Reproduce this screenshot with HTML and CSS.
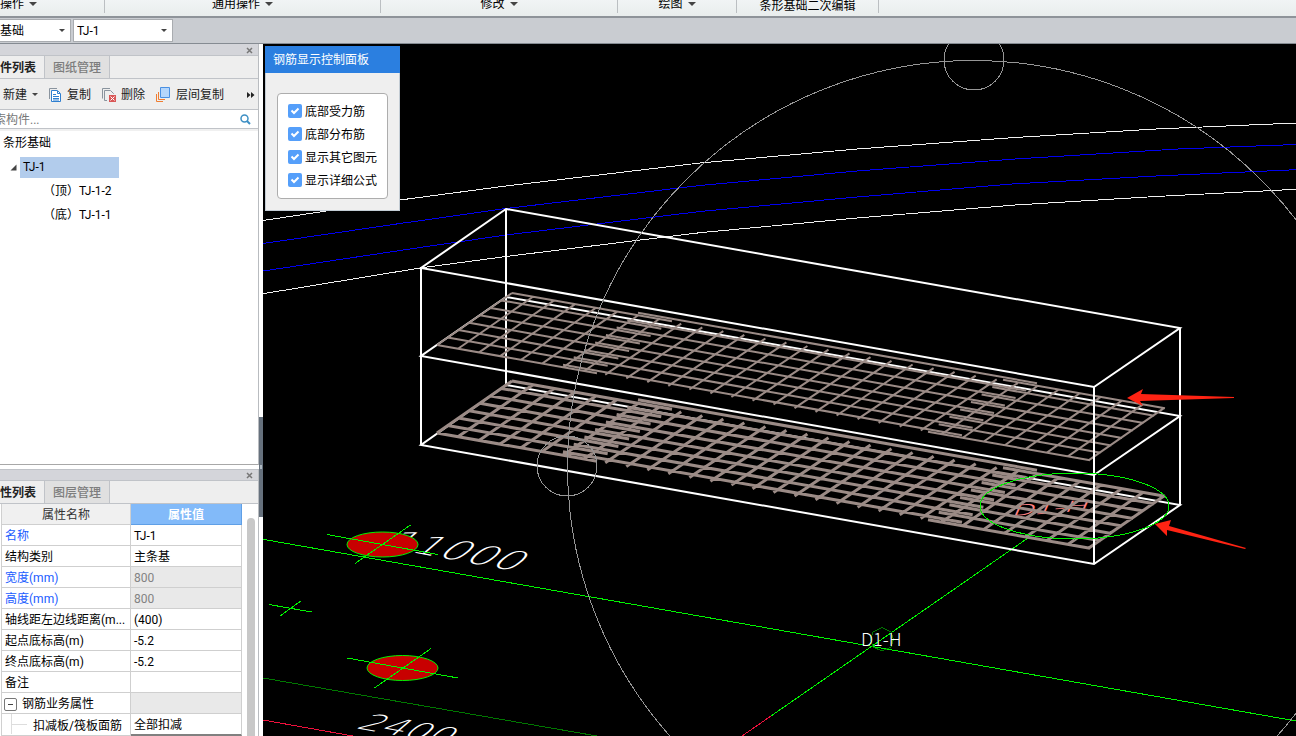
FILE: index.html
```html
<!DOCTYPE html>
<html lang="zh">
<head>
  <meta charset="UTF-8">
  <meta name="viewport" content="width=device-width, initial-scale=1.0">
  <title>条形基础</title>
  <link rel="stylesheet" href="styles.css">
</head>
<body>

  <!-- Ribbon group names -->
  <div class="ribbon">
    <div class="group group-first"><button>操作<i class="arrow"></i></button></div>
    <div class="group group-common"><button>通用操作<i class="arrow"></i></button></div>
    <div class="group group-modify"><button>修改<i class="arrow"></i></button></div>
    <div class="group group-draw"><button>绘图<i class="arrow"></i></button></div>
    <div class="group group-edit"><span>条形基础二次编辑</span></div>
  </div>

  <div class="selectors">
    <select class="type-select" aria-label="基础"><option>基础</option></select>
    <select class="name-select" aria-label="TJ-1"><option>TJ-1</option></select>
  </div>

  <div class="main">
    <div class="dock">

      <!-- Component list -->
      <section class="panel list-panel">
        <div class="panel-title">
          <button class="close"><svg width="7" height="7" viewBox="0 0 7 7"><path d="M1 1L6 6M6 1L1 6"/></svg></button>
        </div>
        <div class="tabs">
          <button class="tab active">件列表</button>
          <button class="tab">图纸管理</button>
        </div>
        <div class="tools">
          <button class="tool tool-new">新建<i class="arrow small"></i></button>
          <button class="tool tool-copy">
            <svg width="13" height="16" viewBox="0 0 13 16"><path d="M.5 12V1.500H8" fill="none" stroke="#8a949e"/><path d="M2.500 3.500H8.500L11.500 6.500V14.500H2.500Z" fill="#fff" stroke="#2f7fd0"/><path d="M8.500 4V6.500H11M4 7.500H7M4 9.500H10M4 11.500H10M4 13H10" fill="none" stroke="#2f7fd0"/></svg>
            复制
          </button>
          <button class="tool tool-delete">
            <svg width="14" height="16" viewBox="0 0 14 16"><path d="M.5 11.500V1.500H8M5 13.500H2.500V3.500H8.500L11.500 6.500V7" fill="none" stroke="#8a949e"/><path d="M7 8H14V15H7Z" fill="#d95757"/><path d="M8.500 9.500L12.500 13.500M12.500 9.500L8.500 13.500" stroke="#fff"/></svg>
            删除
          </button>
          <button class="tool tool-floor">
            <svg width="15" height="16" viewBox="0 0 15 16"><path d="M.5 7V14.500H7" fill="none" stroke="#ef7d31"/><path d="M2.500 5V12.500H9" fill="none" stroke="#ef7d31"/><path d="M4.500 .5H13.500V10.500H4.500Z" fill="#b5d6fb" stroke="#4a90e2"/></svg>
            层间复制
          </button>
          <button class="more"><svg width="8" height="6" viewBox="0 0 8 6"><path d="M0 0L3.500 3L0 6ZM4 0L7.500 3L4 6Z" fill="#222"/></svg></button>
        </div>
        <div class="search">
          <input type="text" placeholder="索构件..." aria-label="索构件">
          <svg width="11" height="11" viewBox="0 0 11 11"><circle cx="4.500" cy="4.500" r="3.500" fill="none" stroke="#3d8fc4" stroke-width="1.500"/><path d="M7 7L10 10" stroke="#3d8fc4" stroke-width="2"/></svg>
        </div>
        <ul class="tree">
          <li class="root">条形基础</li>
          <li class="node"><svg width="7" height="7" viewBox="0 0 7 7"><path d="M6.500 .5V6.500H.5Z" fill="#444"/></svg><span class="selected">TJ-1</span></li>
          <li class="leaf">（顶）TJ-1-2</li>
          <li class="leaf">（底）TJ-1-1</li>
        </ul>
      </section>

      <!-- Property list -->
      <section class="panel prop-panel">
        <div class="panel-title">
          <button class="close"><svg width="7" height="7" viewBox="0 0 7 7"><path d="M1 1L6 6M6 1L1 6"/></svg></button>
        </div>
        <div class="tabs">
          <button class="tab active">性列表</button>
          <button class="tab">图层管理</button>
        </div>
        <div class="props">
          <table>
            <thead>
              <tr><th>属性名称</th><th class="current">属性值</th></tr>
            </thead>
            <tbody>
              <tr><td class="blue">名称</td><td>TJ-1</td></tr>
              <tr><td>结构类别</td><td>主条基</td></tr>
              <tr><td class="blue">宽度(mm)</td><td class="locked">800</td></tr>
              <tr><td class="blue">高度(mm)</td><td class="locked">800</td></tr>
              <tr><td>轴线距左边线距离(m...</td><td>(400)</td></tr>
              <tr><td>起点底标高(m)</td><td>-5.2</td></tr>
              <tr><td>终点底标高(m)</td><td>-5.2</td></tr>
              <tr><td>备注</td><td></td></tr>
              <tr><td class="fold"><button class="minus"></button>钢筋业务属性</td><td class="locked"></td></tr>
              <tr><td class="child">扣减板/筏板面筋</td><td class="editing">全部扣减</td></tr>
            </tbody>
          </table>
          <div class="scrollbar"></div>
        </div>
      </section>
    </div>

    <div class="splitter"><div class="handle"></div></div>

    <!-- 3D view -->
    <div class="view">
      <svg class="scene" viewBox="263 44 1033 692" preserveAspectRatio="xMinYMin slice">
        <g class="thin">
          <polyline class="white" points="263,220.5 400,200 506,186 700,163 857,149 1015,137.500 1156,129 1296,123"/>
          <polyline class="blue-line" points="263,243.500 400,223.500 506,208.500 700,185.500 857,171 1015,159 1178,149 1296,144.500"/>
          <polyline class="blue-line" points="263,271 420,247.500 506,235 700,211.500 857,197 1012,184 1156,176 1296,169.700"/>
          <polyline class="white" points="263,293.700 420,268 506,256.500 700,232.700 857,218 1015,205 1156,196.500 1296,189.300"/>
          <path class="green" d="M263 539.300L1296 721M1028 538L771 716"/>
          <path class="dark-green" d="M263 678L597 736"/>
          <path class="red" d="M771 716L742 736M263 720L353 736"/>
          <path class="green" d="M269 604.500L311.500 612M280 616L301.500 600.500"/>
          <path class="dark-green" d="M882 627.500L891 632L893.500 639L891 647L882 651L873 647L870.500 639L873 632Z"/>
        </g>

        <text class="axis" transform="matrix(1 .18 -.66 .56 382 547)" font-size="42">11000</text>
        <text class="axis" transform="matrix(1 .18 -.66 .56 355 728)" font-size="36">2400</text>
        <text class="label" x="861" y="646" font-size="18">D1-H</text>

        <g class="pile">
          <ellipse cx="382.500" cy="544.500" rx="35.500" ry="12.500"/>
          <path d="M327 534.500L438 554.500M355 563.500L410.500 525"/>
        </g>
        <g class="pile">
          <ellipse cx="402.500" cy="668" rx="35.500" ry="12.500"/>
          <path d="M347 658L458 678M374.500 688L431 648.500"/>
        </g>

        <!-- foundation solid -->
        <g class="solid">
          <path d="M506 209L1180 328L1094 387L421 268Z"/>
          <path d="M506 297L1180 416L1094 475L421 356Z"/>
          <path d="M506 385L1180 505L1094 564L421 445Z"/>
          <path d="M506 209V385M421 268V445M1180 328V505"/>
        </g>

        <text class="mark" transform="matrix(1 -.07 -.2 .45 1011 516)" font-size="34">D1-H</text>
        <g id="mesh-top" class="mesh"></g>
        <g id="mesh-bottom" class="mesh thick"></g>
        <path class="solid" d="M1094 387V564"/>

        <g class="thin">
          <ellipse class="green" cx="1074.500" cy="506" rx="94.500" ry="33"/>
          <circle class="gray" cx="973.500" cy="466.500" r="406"/>
          <circle class="gray" cx="974" cy="60" r="30"/>
          <circle class="gray" cx="567" cy="466" r="30"/>
        </g>

        <path class="pointer" d="M1127 398L1143 389L1141 394L1234 397V398L1140 401L1143 406Z"/>
        <path class="pointer" d="M1155 524L1171 520L1169 526L1246 548L1245 549L1167 530V536Z"/>
      </svg>

      <div class="control-panel">
        <div class="control-title">钢筋显示控制面板</div>
        <div class="options">
          <label><input type="checkbox" checked>底部受力筋</label>
          <label><input type="checkbox" checked>底部分布筋</label>
          <label><input type="checkbox" checked>显示其它图元</label>
          <label><input type="checkbox" checked>显示详细公式</label>
        </div>
      </div>
    </div>
  </div>

  <script src="scene.js"></script>
</body>
</html>
```
FILE: styles.css
```css
* {
  box-sizing: border-box;
}

body {
  margin: 0;
  height: 100vh;
  display: flex;
  flex-direction: column;
  overflow: hidden;
  background: #fff;
  color: #000;
  font-family: Roboto, "Noto Sans CJK SC", sans-serif;
  font-size: 12px;
  line-height: 20px;
}

button, input, select {
  margin: 0;
  padding: 0;
  border: 0;
  background: none;
  color: inherit;
  font: inherit;
}

.arrow {
  display: inline-block;
  margin-left: 5px;
  vertical-align: 2px;
  border: 4px solid transparent;
  border-top: 4px solid #444;
  border-bottom: 0;
}

.arrow.small {
  border-width: 3px 3px 0;
}

/* ribbon */
.ribbon {
  display: flex;
  height: 16px;
  flex-shrink: 0;
  background: linear-gradient(#f1f4f5, #e9eded);
}

.group {
  display: flex;
  justify-content: center;
  align-items: center;
  height: 13px;
  padding-bottom: 5px;
  border-right: 1px solid #bbbfc2;
}

.group-first { width: 105px; justify-content: flex-start; }
.group-common { width: 276px; }
.group-modify { width: 237px; }
.group-draw { width: 119px; }
.group-edit { width: 142px; padding-bottom: 2px; }

/* type / name selectors */
.selectors {
  display: flex;
  gap: 2px;
  height: 28px;
  flex-shrink: 0;
  padding-top: 1px;
  border-top: 2px solid #8e9399;
  border-bottom: 1px solid #858b92;
  background: #c9ccd1;
}

.selectors select {
  height: 23px;
  padding: 0 4px;
  border: 1px solid #a9acb0;
  border-radius: 0;
  appearance: none;
  background: #fff url("data:image/svg+xml,%3Csvg xmlns='http://www.w3.org/2000/svg' width='6' height='3'%3E%3Cpath d='M0 0H6L3 3Z' fill='%23444'/%3E%3C/svg%3E") no-repeat right 5px center;
}

.selectors .type-select {
  width: 71px;
  padding-left: 0;
  border-left: 0;
}

.selectors .name-select {
  width: 100px;
  padding-left: 3px;
}

.main {
  flex: 1;
  display: flex;
  min-height: 0;
}

/* left dock */
.dock {
  width: 259px;
  flex-shrink: 0;
  display: flex;
  flex-direction: column;
  gap: 4px;
}

.panel {
  display: flex;
  flex-direction: column;
  border-right: 1px solid #b9bcc0;
}

.list-panel {
  flex: 1;
  border-bottom: 1px solid #a8a8a8;
}

.prop-panel {
  height: 267px;
  overflow: hidden;
}

.panel-title {
  display: flex;
  justify-content: flex-end;
  align-items: center;
  height: 12px;
  flex-shrink: 0;
  padding: 1px 5px 0 0;
  border-bottom: 1px solid #c0c3c8;
  background: #d4d5da;
}

.prop-panel .panel-title {
  border-top: 1px solid #c0c3c8;
}

.close {
  display: flex;
}

.close path {
  stroke: #777;
  stroke-width: 1.500;
}

.tabs {
  display: flex;
  height: 23px;
  flex-shrink: 0;
  border-bottom: 1px solid #c0c3c8;
  background: #eee;
}

.tab {
  padding: 2px 8px 0;
  border-right: 1px solid #c0c3c8;
  background: #e0e0e0;
  color: #7d7d7d;
  font-weight: 500;
}

.tab.active {
  padding-left: 0;
  background: #eee;
  color: #222;
  font-weight: bold;
}

.tools {
  display: flex;
  align-items: center;
  height: 31px;
  padding: 1px 3px 0;
  border-bottom: 1px solid #c0c3c8;
  background: #eee;
  color: #222;
}

.tool {
  display: flex;
  align-items: center;
  gap: 5px;
  margin-right: 11px;
}

.tool .arrow {
  margin-left: 0;
}

.more {
  display: flex;
  margin-left: auto;
}

.search {
  display: flex;
  align-items: center;
  height: 19px;
  padding: 1px 7px 0 0;
  border-bottom: 1px solid #c0c3c8;
}

.search input {
  flex: 1;
  min-width: 0;
  height: 17px;
  text-indent: -6px;
  outline: 0;
}

.search input::placeholder {
  color: #777;
}

.tree {
  flex: 1;
  margin: 0;
  padding: 0;
  border-top: 2px solid #f0f0f0;
  list-style: none;
  line-height: 21px;
}

.tree li {
  display: flex;
  align-items: center;
  height: 24px;
}

.root {
  padding-left: 3px;
}

.node {
  gap: 3px;
  padding-left: 10px;
}

.leaf {
  padding-left: 43px;
}

.selected {
  width: 99px;
  padding-left: 3px;
  background: #b2ccec;
}

/* property table */
.props {
  display: flex;
  gap: 5px;
}

.props table {
  width: 241px;
  table-layout: fixed;
  border-collapse: separate;
  border-spacing: 0;
  border-left: 1px solid #d0d0d0;
  margin-left: 1px;
}

.props th,
.props td {
  height: 21px;
  padding: 2px 3px 0;
  border-right: 1px solid #cfcfcf;
  border-bottom: 1px solid #cfcfcf;
  font-weight: normal;
  line-height: 18px;
  white-space: nowrap;
}

.props th {
  width: 129px;
  background: #f0f0f0;
  color: #333;
}

.props th.current {
  width: 111px;
  border-color: #5f9fe6;
  background: #82baf9;
  color: #fff;
  font-weight: bold;
}

.props .blue {
  color: #1a5cff;
}

.props .locked {
  background: #e9e9e9;
  color: #828282;
}

.props .child {
  padding-left: 31px;
  background: linear-gradient(#ddd, #ddd) 9px 10px / 16px 1px no-repeat, linear-gradient(#ddd, #ddd) 9px 0 / 1px 20px no-repeat;
}

.props .editing {
  border-bottom: 2px solid #808080;
}

.minus {
  width: 13px;
  height: 13px;
  margin-right: 5px;
  border: 1px solid #777;
  border-radius: 2px;
  background: linear-gradient(#444, #444) center / 5px 1px no-repeat;
  vertical-align: -2px;
}

.props .fold {
  padding-left: 2px;
}

.scrollbar {
  width: 8px;
  margin-top: 14px;
  border-radius: 4px 4px 0 0;
  background: #c8c8c8;
}

.splitter {
  display: flex;
  flex-direction: column;
  justify-content: flex-end;
  width: 4px;
  flex-shrink: 0;
  padding-bottom: 219px;
}

.handle {
  height: 100px;
  background: linear-gradient(#aeb8c0, #aeb8c0) 1px center / 2px 4px no-repeat, #66717d;
}

/* 3D view */
.view {
  flex: 1;
  position: relative;
  min-width: 0;
  background: #000;
  overflow: hidden;
}

.scene {
  display: block;
  width: 100%;
  height: 100%;
}

.thin,
.pile path {
  fill: none;
  stroke-width: 1;
  shape-rendering: crispEdges;
}

.white { stroke: #f0f0f0; }
.blue-line { stroke: #0000f0; }
.green { stroke: #00f400; }
.dark-green { stroke: #007800; }
.red { stroke: #f0103c; }
.gray { stroke: #969696; }

.pile {
  fill: #c80000;
  stroke: #00f400;
}

.solid {
  fill: none;
  stroke: #fff;
  stroke-width: 2;
}

.mesh {
  fill: none;
  stroke: #9b8b86;
  stroke-width: 2;
}

.mesh.thick {
  stroke-width: 3;
}

.axis {
  fill: #fff;
  font-family: "DejaVu Sans Light", "DejaVu Sans", sans-serif;
  font-weight: 200;
}

.label {
  fill: #fff;
  font-family: "Noto Sans CJK SC", sans-serif;
  font-weight: 300;
}

.mark {
  fill: #ff8080;
  font-family: "Noto Sans CJK SC", sans-serif;
  font-weight: 300;
}

.pointer {
  fill: #ff2313;
}

/* floating display panel */
.control-panel {
  position: absolute;
  top: 2px;
  left: 2px;
  width: 135px;
  border: 1px solid #c3ccd4;
  border-top: 0;
  background: #efefef;
}

.control-title {
  height: 27px;
  margin: 0 -1px;
  padding-left: 8px;
  background: #2b7fe0;
  color: #fff;
  line-height: 28px;
}

.options {
  margin: 20px 11px 11px;
  padding: 6px 0 6px 10px;
  border: 1px solid #adadad;
  border-radius: 4px;
  background: #fff;
}

.options label {
  display: flex;
  align-items: center;
  gap: 3px;
  height: 23px;
  white-space: nowrap;
}

.options input {
  width: 14px;
  height: 14px;
  margin-bottom: 1px;
  border-radius: 2px;
  appearance: none;
  background: #559ffa url("data:image/svg+xml,%3Csvg xmlns='http://www.w3.org/2000/svg' width='14' height='14'%3E%3Cpath d='M3.500 6.500L6 9L10.500 4.500' fill='none' stroke='white' stroke-width='2'/%3E%3C/svg%3E");
}
```
FILE: scene.js
```js
const SLOPE = 0.1765;
const ROWS = 8;

// Draw one rebar layer, dy is the offset from the upper layer
function drawMesh(id, dy, lap) {
  let d = '';
  const bar = (x1, y1, x2, y2) => {
    d += `M${x1.toFixed(1)} ${(y1 + dy).toFixed(1)}L${x2.toFixed(1)} ${(y2 + dy).toFixed(1)}`;
  };

  // bars along the strip, three pieces with overlaps
  for (let i = 0; i < ROWS; i++) {
    const x = 512 - i * 75 / 7;
    const y = 293 + i * 52 / 7;
    bar(x, y, x + 160, y + 160 * SLOPE);
    bar(x + 126, y + 126 * SLOPE - lap, x + 525, y + 525 * SLOPE - lap);
    bar(x + 491, y + 491 * SLOPE, x + 653, y + 653 * SLOPE);
  }

  // bars across the strip
  for (let i = 0; i < 32; i++) {
    const x = 437 + i * 21.03;
    const y = 345 + i * 21.03 * SLOPE;
    const ext = i > 7 && i < 25 ? 1 : 0;
    bar(x, y, x + 75 + ext, y - 52 + ext);
  }

  const path = document.createElementNS('http://www.w3.org/2000/svg', 'path');
  path.setAttribute('d', d);
  document.getElementById(id).appendChild(path);
}

drawMesh('mesh-top', 0, 2.5);
drawMesh('mesh-bottom', 88, 3.5);
```
